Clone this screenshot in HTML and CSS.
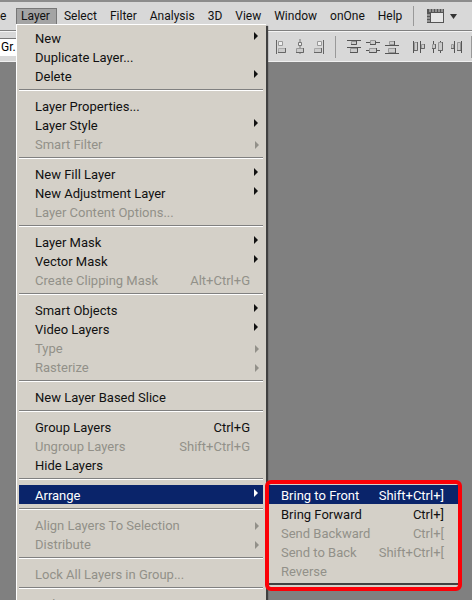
FILE: index.html
```html
<!DOCTYPE html>
<html lang="en">
<head>
    <meta charset="UTF-8">
    <meta name="viewport" content="width=device-width, initial-scale=1.0">
    <title>Layer Menu</title>
    <link rel="stylesheet" href="styles.css">
</head>
<body>

<!-- Menu bar -->
<nav class="menubar">
    <ul class="menubar-list">
        <li class="cut"><button>e</button></li>
        <li class="open">
            <button>Layer</button>

            <!-- Layer menu -->
            <ul class="menu">
                <li><button class="more">New</button></li>
                <li><button>Duplicate Layer...</button></li>
                <li><button class="more">Delete</button></li>
                <li class="line"></li>
                <li><button>Layer Properties...</button></li>
                <li><button class="more">Layer Style</button></li>
                <li><button class="more" disabled>Smart Filter</button></li>
                <li class="line"></li>
                <li><button class="more">New Fill Layer</button></li>
                <li><button class="more">New Adjustment Layer</button></li>
                <li><button disabled>Layer Content Options...</button></li>
                <li class="line"></li>
                <li><button class="more">Layer Mask</button></li>
                <li><button class="more">Vector Mask</button></li>
                <li><button disabled>Create Clipping Mask <span>Alt+Ctrl+G</span></button></li>
                <li class="line"></li>
                <li><button class="more">Smart Objects</button></li>
                <li><button class="more">Video Layers</button></li>
                <li><button class="more" disabled>Type</button></li>
                <li><button class="more" disabled>Rasterize</button></li>
                <li class="line"></li>
                <li><button>New Layer Based Slice</button></li>
                <li class="line"></li>
                <li><button>Group Layers <span>Ctrl+G</span></button></li>
                <li><button disabled>Ungroup Layers <span>Shift+Ctrl+G</span></button></li>
                <li><button>Hide Layers</button></li>
                <li class="line"></li>
                <li class="parent">
                    <button class="more selected">Arrange</button>
                    <ul class="submenu">
                        <li><button class="selected">Bring to Front <span>Shift+Ctrl+]</span></button></li>
                        <li><button>Bring Forward <span>Ctrl+]</span></button></li>
                        <li><button disabled>Send Backward <span>Ctrl+[</span></button></li>
                        <li><button disabled>Send to Back <span>Shift+Ctrl+[</span></button></li>
                        <li><button disabled>Reverse</button></li>
                    </ul>
                </li>
                <li class="line"></li>
                <li><button class="more" disabled>Align Layers To Selection</button></li>
                <li><button class="more" disabled>Distribute</button></li>
                <li class="line"></li>
                <li><button disabled>Lock All Layers in Group...</button></li>
                <li class="line"></li>
                <li><button disabled>Link Layers</button></li>
            </ul>
        </li>
        <li><button>Select</button></li>
        <li><button>Filter</button></li>
        <li><button>Analysis</button></li>
        <li><button>3D</button></li>
        <li><button>View</button></li>
        <li><button>Window</button></li>
        <li><button>onOne</button></li>
        <li><button>Help</button></li>
    </ul>
    <button class="extras" aria-label="View Extras">
        <svg width="32" height="16" viewBox="0 0 32 16">
            <rect x="0" y="1" width="17" height="14" fill="#555"/>
            <rect x="4" y="5" width="12" height="9" fill="#e6e6e6"/>
            <path d="M3 1v3M6 1v3M9 1v3M12 1v3M15 1v3M0 7h3M0 10h3M0 13h3" stroke="#ccc"/>
            <path d="M23 6h7l-3.5 5z" fill="#333"/>
        </svg>
    </button>
</nav>

<!-- Options bar -->
<div class="options">
    <select class="auto" aria-label="Auto-Select"><option>Gr...</option></select>
    <div class="tools">
        <button aria-label="Align left edges">
            <svg width="12" height="16" viewBox="0 0 12 16">
                <path d="M1.5 1v14" stroke="#666"/>
                <path d="M3.5 2.5h4v4h-4z" fill="#eee" stroke="#999"/>
                <path d="M3.5 9.5h7v4h-7z" fill="#ccc" stroke="#aaa"/>
                <path d="M3 13.5h7.5V9" fill="none" stroke="#666"/>
            </svg>
        </button>
        <button aria-label="Align horizontal centers">
            <svg width="12" height="16" viewBox="0 0 12 16">
                <path d="M6 0v15" stroke="#777"/>
                <path d="M4.5 3.5h3v3h-3z" fill="#eee" stroke="#777"/>
                <path d="M2.5 9.5h7v4h-7z" fill="#ccc" stroke="#999"/>
                <path d="M2 13.5h7.5V9" fill="none" stroke="#666"/>
            </svg>
        </button>
        <button aria-label="Align right edges">
            <svg width="12" height="16" viewBox="0 0 12 16">
                <path d="M10.5 1v14" stroke="#666"/>
                <path d="M4.5 2.5h4v4h-4z" fill="#eee" stroke="#999"/>
                <path d="M1.5 9.5h7v4h-7z" fill="#ccc" stroke="#aaa"/>
                <path d="M1 13.5h7.5V9" fill="none" stroke="#666"/>
            </svg>
        </button>
    </div>
    <div class="tools wide">
        <button aria-label="Distribute top edges">
            <svg width="14" height="16" viewBox="0 0 14 16">
                <path d="M0 1.5h14M0 8.5h14" stroke="#555"/>
                <path d="M4.5 2.5h5v3h-5zM3.5 9.5h7v4h-7z" fill="#ccc" stroke="#999"/>
                <path d="M4 5.5h5.5V2M3 13.5h7.5V9" fill="none" stroke="#555"/>
            </svg>
        </button>
        <button aria-label="Distribute vertical centers">
            <svg width="14" height="16" viewBox="0 0 14 16">
                <path d="M0 3.5h14M0 11.5h14" stroke="#555"/>
                <path d="M4.5 1.5h5v4h-5zM3.5 9.5h7v4h-7z" fill="#ccc" stroke="#999"/>
                <path d="M4 5.5h5.5V2M3 13.5h7.5V9" fill="none" stroke="#555"/>
            </svg>
        </button>
        <button aria-label="Distribute bottom edges">
            <svg width="14" height="16" viewBox="0 0 14 16">
                <path d="M0 6.5h14M0 14.5h14" stroke="#555"/>
                <path d="M4.5 2.5h5v3h-5zM3.5 9.5h7v4h-7z" fill="#ccc" stroke="#999"/>
                <path d="M9.5 2v4M10.5 9v5" stroke="#555"/>
            </svg>
        </button>
    </div>
    <div class="tools last">
        <button aria-label="Distribute left edges">
            <svg width="13" height="16" viewBox="0 0 13 16">
                <path d="M1.5 2v12M8.5 2v12" stroke="#555"/>
                <path d="M2.5 3.5h3v8h-3zM9.5 5.5h3v4h-3z" fill="#ccc" stroke="#999"/>
                <path d="M5.5 3v8.5H2M12.5 5v4.5H9" fill="none" stroke="#666"/>
            </svg>
        </button>
        <button aria-label="Distribute horizontal centers">
            <svg width="13" height="16" viewBox="0 0 13 16">
                <path d="M2.5 2v12M9.5 2v12" stroke="#555"/>
                <path d="M1.5 5.5h3v4h-3zM7.5 3.5h4v8h-4z" fill="#ccc" stroke="#999"/>
                <path d="M4.5 5v4.5H1M11.5 3v8.5H7" fill="none" stroke="#666"/>
            </svg>
        </button>
        <button aria-label="Distribute right edges">
            <svg width="13" height="16" viewBox="0 0 13 16">
                <path d="M4.5 2v12M11.5 2v12" stroke="#555"/>
                <path d="M1.5 5.5h2v4h-2zM7.5 3.5h3v8h-3z" fill="#ccc" stroke="#999"/>
                <path d="M1 9.5h3M7 11.5h4" stroke="#666"/>
            </svg>
        </button>
    </div>
</div>

</body>
</html>
```
FILE: styles.css
```css
* { box-sizing: border-box; }
body { margin: 0; height: 100vh; overflow: hidden; background: #808080; font-family: Roboto, "Noto Sans", sans-serif; font-size: 13px; color: #111; }
ul { list-style: none; margin: 0; padding: 0; }
button { font: inherit; color: inherit; background: none; border: 0; margin: 0; padding: 0; white-space: nowrap; }
svg { display: block; }

/* Menu bar */
.menubar { display: flex; align-items: center; height: 31px; border-top: 2px solid #8c8c8c; border-bottom: 1px solid #808080; background: #d8d8d8; }
.menubar-list { display: flex; font-size: 12px; }
.menubar-list > li > button { display: block; height: 16px; padding: 0 7px 0 6px; line-height: 16px; }
.menubar-list > .cut { width: 16px; }
.menubar-list > .cut > button { padding: 0; }
.open { position: relative; margin-right: 1px; }
.open > button { background: #a4a4a4; border: 1px solid #777; border-bottom: 0; }
.menubar-list > .open > button { padding: 0 6px 0 4px; line-height: 15px; }
.extras { margin-left: 4px; padding: 2px 0 2px 13px; border-left: 1px solid #999; }

/* Options bar */
.options { display: flex; align-items: center; height: 31px; border-top: 1px solid #f4f4f4; border-bottom: 1px solid #f0f0f0; background: #d8d8d8; }
.auto { width: 260px; height: 18px; margin-right: 15px; padding: 0 1px; border: 0; border-top: 1px solid #777; background: #fff; font: inherit; font-size: 12px; line-height: 16px; appearance: none; }
.tools { display: flex; gap: 7px; padding-right: 10px; border-right: 1px solid #999; }
.tools.wide { gap: 5px; margin-left: 11px; border: 0; }
.tools.last { gap: 6px; margin-left: 3px; padding-right: 8px; }
.tools button { padding: 3px 0; }

/* Drop-down menu */
.menu { position: absolute; top: 16px; left: 0; z-index: 1; width: 250px; padding: 3px 3px 2px 2px; background: #d4d0c8; border-top: 1px solid #fff; border-left: 1px solid #fff; box-shadow: 2px 2px 1px #404040; font-size: 13px; }
.menu button { display: flex; justify-content: space-between; width: 100%; height: 19px; padding: 2px 13px 0 16px; line-height: 17px; text-align: left; }
.menu button:disabled { color: #929089; }
.menu .selected { background: #0a246a; color: #fff; }
.line { height: 2px; margin: 4px 0 5px; border-top: 1px solid #808080; border-bottom: 1px solid #fff; }
.more::after { content: ""; height: 0; margin: 2px -12px 0 0; border: 4px solid transparent; border-left-color: currentColor; }
.more:disabled::after { margin: 5px -13px 0 0; }
.parent { position: relative; }

/* Submenu with highlight frame */
.submenu { position: absolute; top: -5px; left: 246px; width: 197px; padding: 1px 0 2px; background: #d4d0c8; border: 4px solid #fb0007; border-radius: 6px; }
.submenu button { padding: 2px 14px 0 12px; }
.submenu::after { content: ""; display: block; height: 2px; margin-top: 3px; background: #404040; }
```
